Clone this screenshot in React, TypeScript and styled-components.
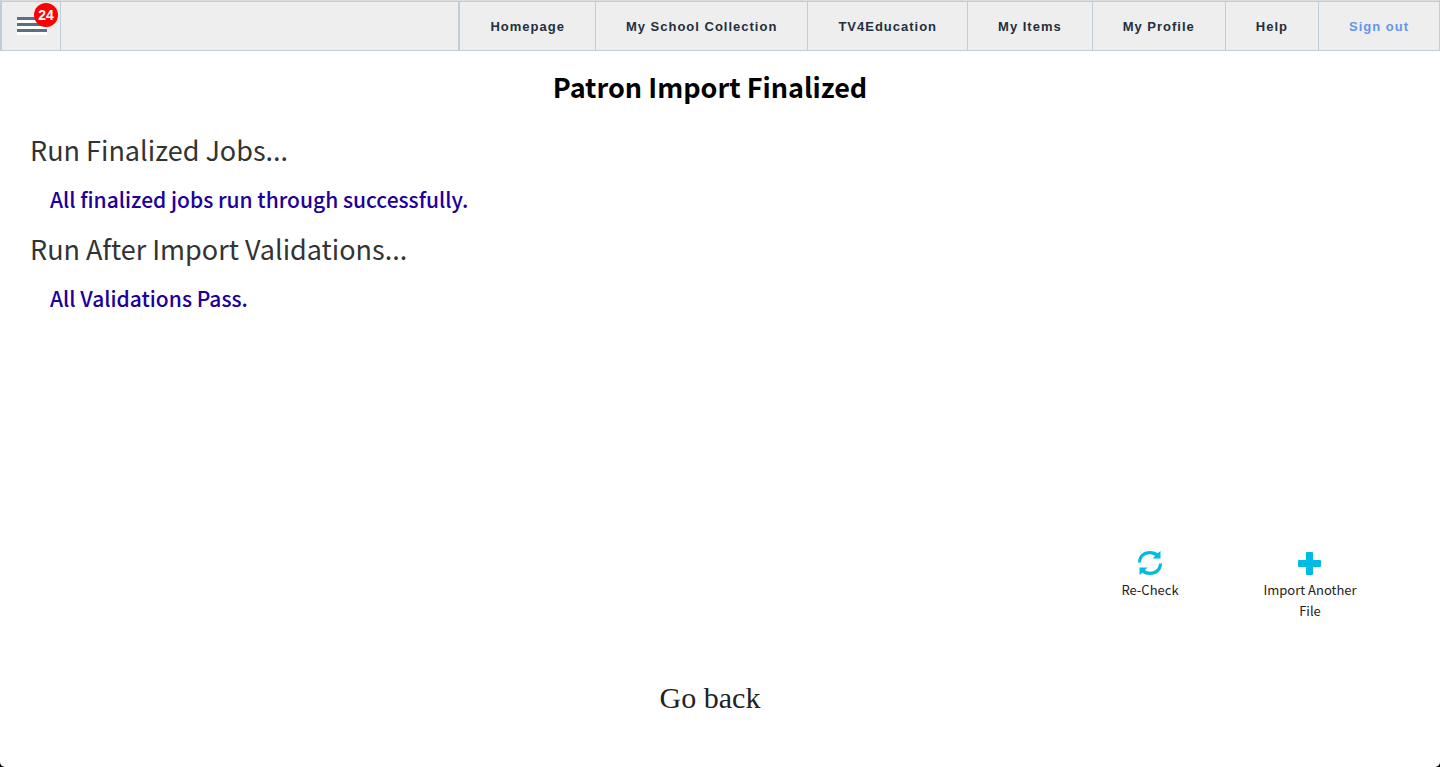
import React from "react";
import styled, { createGlobalStyle } from "styled-components";

const GlobalStyle = createGlobalStyle`
  *, *::before, *::after { box-sizing: border-box; }
  html { background: #000; }
  body {
    margin: 0;
    color: #222;
    font-family: "Noto Sans CJK SC", "Open Sans", sans-serif;
  }
`;

const Page = styled.div`
  display: flex;
  flex-direction: column;
  min-height: 100vh;
  background: #fff;
  border-radius: 0 0 5px 5px;
`;

const TopBar = styled.header`
  display: flex;
  height: 51px;
  padding-top: 1px;
  background: #eee;
  border: 1px solid #c0ccd8;
  border-top-color: #dcdcdc;
  border-left-width: 2px;
  box-shadow: inset 0 1px #c0ccd8;
`;

const MenuButton = styled.button`
  position: relative;
  width: 59px;
  padding: 0 0 0 15px;
  border: 0;
  border-right: 1px solid #c0ccd8;
  background: none;
  cursor: pointer;
`;

const MenuLine = styled.span`
  display: block;
  width: 30px;
  height: 6px;
  background: #fff;
  border-top: 3px solid #5a6e85;
`;

const Badge = styled.span`
  position: absolute;
  top: 1px;
  right: 2px;
  width: 24px;
  height: 24px;
  border-radius: 50%;
  background: #f00;
  color: #fff;
  font: bold 14px/24px "Liberation Sans", Arial, sans-serif;
  text-align: center;
`;

const Nav = styled.nav`
  display: flex;
  margin-left: auto;
  border-left: 1px solid #c0ccd8;
`;

const NavLink = styled.a<{ $accent?: boolean }>`
  display: flex;
  align-items: center;
  padding: 2px 30px 0;
  border-left: 1px solid #c0ccd8;
  color: ${(p) => (p.$accent ? "#6495ed" : "#232f3e")};
  font: bold 13px/20px "Liberation Sans", Arial, sans-serif;
  letter-spacing: 1px;
  text-decoration: none;
  white-space: nowrap;

  &:nth-child(-n + 5) {
    margin-bottom: -1px;
    padding-bottom: 1px;
  }
`;

const Main = styled.main`
  display: flex;
  flex: 1;
  flex-direction: column;
  padding: 16px 50px 49px 30px;
`;

const Title = styled.h1`
  margin: 0 0 23px;
  color: #000;
  font-size: 27px;
  font-weight: 700;
  line-height: 40px;
  text-align: center;
`;

const StepHeading = styled.h2`
  margin: 0;
  color: #333;
  font-size: 27px;
  font-weight: 400;
  line-height: 40px;
`;

const StepResult = styled.p`
  margin: 0;
  padding: 10px 20px;
  color: #20009a;
  font-size: 21px;
  font-weight: 500;
  line-height: 39px;
`;

const Actions = styled.div`
  display: flex;
  justify-content: flex-end;
  gap: 40px;
  margin-top: auto;
  padding-right: 20px;
`;

const ActionButton = styled.button`
  display: flex;
  flex-direction: column;
  align-items: center;
  width: 120px;
  padding: 0 10px;
  border: 0;
  background: none;
  color: #222;
  font: 13px/21px "Noto Sans CJK SC", "Open Sans", sans-serif;
  cursor: pointer;

  svg {
    width: 26px;
    height: 26px;
    margin-bottom: 3px;
    fill: #00bce4;
  }
`;

const BackLink = styled.a`
  align-self: center;
  margin-top: 57px;
  color: #222;
  font: 30px/40px "Liberation Serif", "Times New Roman", serif;
  text-decoration: none;
`;

const links = ["Homepage", "My School Collection", "TV4Education", "My Items", "My Profile", "Help"];

const steps = [
  { heading: "Run Finalized Jobs...", result: "All finalized jobs run through successfully." },
  { heading: "Run After Import Validations...", result: "All Validations Pass." },
];

export default function App() {
  return (
    <Page>
      <GlobalStyle />
      <TopBar>
        <MenuButton aria-label="Menu">
          <MenuLine />
          <MenuLine />
          <MenuLine />
          <Badge>24</Badge>
        </MenuButton>
        <Nav>
          {links.map((label) => (
            <NavLink key={label} href="#">{label}</NavLink>
          ))}
          <NavLink href="#" $accent>Sign out</NavLink>
        </Nav>
      </TopBar>
      <Main>
        <Title>Patron Import Finalized</Title>
        {steps.map((step) => (
          <section key={step.heading}>
            <StepHeading>{step.heading}</StepHeading>
            <StepResult>{step.result}</StepResult>
          </section>
        ))}
        <Actions>
          <ActionButton>
            <svg viewBox="0 0 26 26" aria-hidden="true">
              <path d="M1 12.500C1 5.500 6 1 13 1c3 0 5.500.8 7.600 2.200L23.500 1v7.500H15.500l2.600-2.600C12.500 2.300 4.400 5 4 12.500zM25 13.500C25 20.500 20 25 13 25c-3 0-5.500-.8-7.600-2.200L2.500 25v-7.500h8l-2.600 2.600C13.500 23.700 21.600 21 22 13.500z" />
            </svg>
            Re-Check
          </ActionButton>
          <ActionButton>
            <svg viewBox="0 0 26 26" aria-hidden="true">
              <path d="M10 2h5q1 0 1 1v7h7q1 0 1 1v5q0 1-1 1h-7v7q0 1-1 1h-5q-1 0-1-1v-7H2q-1 0-1-1v-5q0-1 1-1h7V3q0-1 1-1z" />
            </svg>
            Import Another File
          </ActionButton>
        </Actions>
        <BackLink href="#">Go back</BackLink>
      </Main>
    </Page>
  );
}
